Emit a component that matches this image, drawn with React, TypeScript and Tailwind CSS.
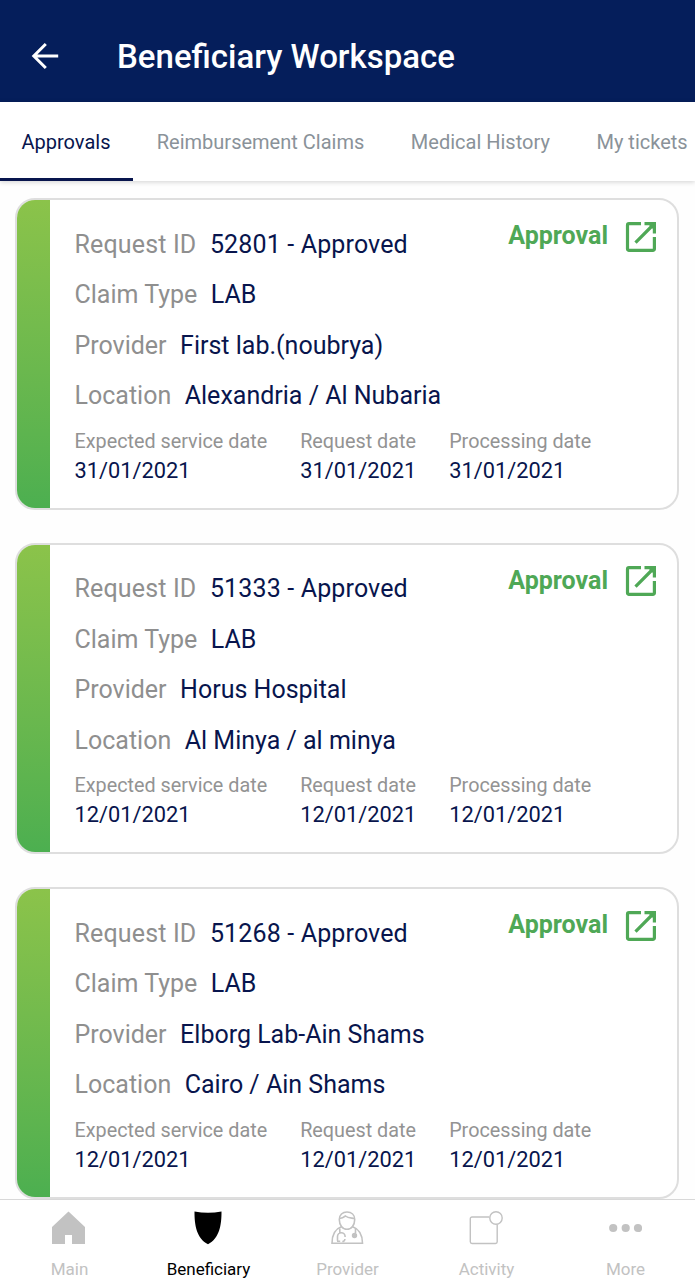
type Approval = {
  id: string;
  status: string;
  claimType: string;
  provider: string;
  location: string;
  date: string;
};

const approvals: Approval[] = [
  { id: '52801', status: 'Approved', claimType: 'LAB', provider: 'First lab.(noubrya)', location: 'Alexandria / Al Nubaria', date: '31/01/2021' },
  { id: '51333', status: 'Approved', claimType: 'LAB', provider: 'Horus Hospital', location: 'Al Minya / al minya', date: '12/01/2021' },
  { id: '51268', status: 'Approved', claimType: 'LAB', provider: 'Elborg Lab-Ain Shams', location: 'Cairo / Ain Shams', date: '12/01/2021' },
];

const tabs = ['Approvals', 'Reimbursement Claims', 'Medical History', 'My tickets'];

function BackIcon() {
  return (
    <svg width="28" height="28" viewBox="0 0 28 28" fill="none" stroke="currentColor" strokeWidth="3">
      <path d="M27.2 14H3M14.8 2L2.8 14l12 12" />
    </svg>
  );
}

function OpenIcon() {
  return (
    <svg width="32" height="32" viewBox="0 0 32 32" fill="none" stroke="currentColor" strokeWidth="3.2">
      <path d="M16 2.6H4a1.5 1.5 0 0 0-1.5 1.5v23.800A1.5 1.5 0 0 0 4 29.400h23.900a1.500 1.500 0 0 0 1.500-1.500V16" />
      <path d="M19.500 2.600h9.900v10M29 3L10.500 21.700" />
      <path d="M23 3h6v6z" fill="currentColor" stroke="none" />
    </svg>
  );
}

function HomeIcon() {
  return (
    <svg width="34" height="34" viewBox="0 0 34 34" fill="currentColor">
      <path d="M16.500.500L33 16v17H20v-9h-7v9H0V16z" />
    </svg>
  );
}

function ShieldIcon() {
  return (
    <svg width="34" height="34" viewBox="0 0 34 34" fill="currentColor">
      <path d="M3.500.600Q17 3 30.500.600C30.600 14 28.500 27.500 17 33.300 5.500 27.500 3.400 14 3.500.600z" />
    </svg>
  );
}

function DoctorIcon() {
  return (
    <svg width="34" height="34" viewBox="0 0 34 34" fill="none" stroke="currentColor" strokeWidth="1.6">
      <path d="M9.300 8.500C9.300 3.800 12.500 1 17 1s7.700 2.800 7.700 7.500C24.700 14 21.500 18.300 17 18.300S9.300 14 9.300 8.500z" />
      <path d="M9.500 7.500c2.500-.2 4-1 6-2.500 2.500 2 5 1.800 9 2.500" />
      <path d="M11.800 15.500C5 18 2 23 2 32.300h30.500c0-9.300-3.500-14.300-10.300-16.800" />
      <path d="M9.800 17.500V22M7 30.300h3.200M7.500 29.700V25.500a3.800 3.800 0 0 1 7.600 0v.5M12.300 30.500a2.500 2.500 0 0 0 2.600-2.500M25.500 18v4" />
      <circle cx="24.500" cy="24.500" r="1.900" fill="currentColor" />
    </svg>
  );
}

function ActivityIcon() {
  return (
    <svg width="34" height="34" viewBox="0 0 34 34" fill="none" stroke="currentColor" strokeWidth="1.4">
      <path d="M20.500 6H3a1.700 1.700 0 0 0-1.700 1.700v23.100A1.700 1.700 0 0 0 3 32.500h23.500a1.700 1.700 0 0 0 1.700-1.700V13.300" />
      <circle cx="27" cy="7" r="6.200" />
    </svg>
  );
}

function MoreIcon() {
  return (
    <svg width="34" height="34" viewBox="0 0 34 34" fill="currentColor">
      <circle cx="5.200" cy="17" r="4.100" />
      <circle cx="17.700" cy="17" r="4.100" />
      <circle cx="30" cy="17" r="4.100" />
    </svg>
  );
}

const navItems = [
  { label: 'Main', icon: HomeIcon },
  { label: 'Beneficiary', icon: ShieldIcon },
  { label: 'Provider', icon: DoctorIcon },
  { label: 'Activity', icon: ActivityIcon },
  { label: 'More', icon: MoreIcon },
];

function Field({ label, value, className = '' }: { label: string; value: string; className?: string }) {
  return (
    <div className="flex h-[50.5px] items-center gap-[13.5px] text-[25px] whitespace-nowrap">
      <span className={`text-[#8f8f8f] ${className}`}>{label}</span>
      <span className={`text-[#08154d] ${className}`}>{value}</span>
    </div>
  );
}

function DateField({ label, value }: { label: string; value: string }) {
  return (
    <div className="whitespace-nowrap">
      <p className="text-[19.8px] leading-[28px] text-[#939393]">{label}</p>
      <p className="text-[21.8px] leading-[29px] text-[#08154d]">{value}</p>
    </div>
  );
}

function ApprovalCard({ item }: { item: Approval }) {
  return (
    <article className="flex h-[312px] overflow-hidden rounded-[20px] border-2 border-[#dedede] bg-white">
      <div className="w-[33px] shrink-0 bg-gradient-to-b from-[#8bc34a] to-[#4caf50]" />
      <div className="min-w-0 flex-1 pt-[19px] pr-5 pl-[24.5px]">
        <div className="flex h-[50.5px] justify-between">
          <Field label="Request ID" value={`${item.id} - ${item.status}`} className="tracking-[0.15px]" />
          <div className="flex items-start gap-[17px] text-[#4fa856]">
            <span className="pt-[1px] text-[25px] leading-[32px] font-bold">Approval</span>
            <span className="pt-[1.5px]">
              <OpenIcon />
            </span>
          </div>
        </div>
        <Field label="Claim Type" value={item.claimType} />
        <Field label="Provider" value={item.provider} />
        <Field label="Location" value={item.location} />
        <div className="mt-[6.5px] flex gap-[33px]">
          <DateField label="Expected service date" value={item.date} />
          <DateField label="Request date" value={item.date} />
          <DateField label="Processing date" value={item.date} />
        </div>
      </div>
    </article>
  );
}

export default function App() {
  return (
    <div className="flex h-[1280px] w-[695px] flex-col overflow-hidden bg-[#fefefe] font-['Roboto',sans-serif]">
      <header className="flex h-[102px] shrink-0 items-center bg-[#051e5b] pt-[12px] pl-[31px] text-white">
        <div className="pb-[3px]">
          <BackIcon />
        </div>
        <h1 className="ml-[58px] text-[33px] font-medium">Beneficiary Workspace</h1>
      </header>

      <nav className="z-10 flex h-[79px] shrink-0 bg-white shadow-[0_1px_5px_rgba(0,0,0,0.18)]">
        {tabs.map((tab, index) => (
          <div
            key={tab}
            className={`flex shrink-0 items-center border-b-[3px] pt-[4px] text-[20px] whitespace-nowrap ${
              index === 0 ? 'border-[#08154d] pr-[23px] pl-[21.5px] text-[#08154d]' : 'border-transparent px-[23.3px] text-[#8a9299]'
            }`}
          >
            {tab}
          </div>
        ))}
      </nav>

      <main className="flex min-h-0 flex-1 flex-col gap-[32.8px] overflow-hidden pt-[17px] pr-[16px] pl-[15px]">
        {approvals.map((item) => (
          <ApprovalCard key={item.id} item={item} />
        ))}
      </main>

      <footer className="grid h-[81px] shrink-0 grid-cols-5 border-t border-[#d8d8d8] bg-white">
        {navItems.map(({ label, icon: Icon }) => (
          <div key={label} className={`flex flex-col items-center pt-[11px] ${label === 'Beneficiary' ? 'text-black' : 'text-[#c2c2c2]'}`}>
            <span className="pr-[2px]">
              <Icon />
            </span>
            <span className="mt-[12px] text-[17px] leading-[24px]">{label}</span>
          </div>
        ))}
      </footer>
    </div>
  );
}
